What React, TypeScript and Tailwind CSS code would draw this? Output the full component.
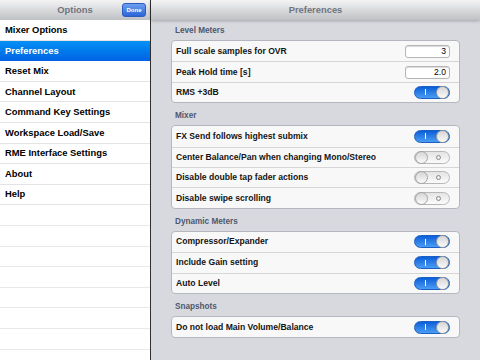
import React from 'react';

type Row =
  | { label: string; kind: 'field'; value: string }
  | { label: string; kind: 'toggle'; on: boolean };

interface Section {
  title: string;
  rows: Row[];
}

const menu = [
  'Mixer Options',
  'Preferences',
  'Reset Mix',
  'Channel Layout',
  'Command Key Settings',
  'Workspace Load/Save',
  'RME Interface Settings',
  'About',
  'Help',
];

const sections: Section[] = [
  {
    title: 'Level Meters',
    rows: [
      { label: 'Full scale samples for OVR', kind: 'field', value: '3' },
      { label: 'Peak Hold time [s]', kind: 'field', value: '2.0' },
      { label: 'RMS +3dB', kind: 'toggle', on: true },
    ],
  },
  {
    title: 'Mixer',
    rows: [
      { label: 'FX Send follows highest submix', kind: 'toggle', on: true },
      { label: 'Center Balance/Pan when changing Mono/Stereo', kind: 'toggle', on: false },
      { label: 'Disable double tap fader actions', kind: 'toggle', on: false },
      { label: 'Disable swipe scrolling', kind: 'toggle', on: false },
    ],
  },
  {
    title: 'Dynamic Meters',
    rows: [
      { label: 'Compressor/Expander', kind: 'toggle', on: true },
      { label: 'Include Gain setting', kind: 'toggle', on: true },
      { label: 'Auto Level', kind: 'toggle', on: true },
    ],
  },
  {
    title: 'Snapshots',
    rows: [{ label: 'Do not load Main Volume/Balance', kind: 'toggle', on: true }],
  },
];

function Toggle({ on }: { on: boolean }) {
  if (on) {
    return (
      <div className="flex h-[13px] w-[36px] items-center rounded-full border border-[#1c5fc4] bg-gradient-to-b from-[#0a5fd8] to-[#4a9cf3]">
        <div className="flex flex-1 justify-center">
          <div className="h-[6px] w-[1px] bg-white" />
        </div>
        <div className="h-[13px] w-[13px] rounded-full border border-[#9a9a9a] bg-gradient-to-b from-[#d6d6d6] to-[#fafafa]" />
      </div>
    );
  }
  return (
    <div className="flex h-[13px] w-[36px] items-center rounded-full border border-[#b7b7b7] bg-gradient-to-b from-[#e4e4e4] to-[#fbfbfb]">
      <div className="h-[13px] w-[13px] rounded-full border border-[#a5a5a5] bg-gradient-to-b from-[#d6d6d6] to-[#fafafa]" />
      <div className="flex flex-1 justify-center">
        <div className="h-[5px] w-[5px] rounded-full border border-[#8a8a8a]" />
      </div>
    </div>
  );
}

export default function App() {
  return (
    <div className="flex h-[360px] w-[480px] overflow-hidden font-['Liberation_Sans',Arial,sans-serif]">
      {/* Options list */}
      <div className="flex w-[151px] shrink-0 flex-col overflow-hidden border-r border-[#2f2f2f] bg-white">
        <div className="grid h-[20px] shrink-0 grid-cols-[1fr_auto_1fr] items-center bg-gradient-to-b from-[#f4f4f4] to-[#bfc1c4]">
          <div />
          <span className="text-[9.4px] font-bold text-[#6f7580]">Options</span>
          <div className="flex justify-end pr-[4px]">
            <span className="flex h-[14px] w-[24px] items-center justify-center rounded-[3px] border border-[#2b5cc0] bg-gradient-to-b from-[#6d9eee] to-[#2a64d8] text-[6px] font-bold text-white">
              Done
            </span>
          </div>
        </div>
        {menu.map((item) => (
          <div
            key={item}
            className={
              item === 'Preferences'
                ? 'flex h-[20.6px] shrink-0 items-center bg-gradient-to-b from-[#0890f4] to-[#0262e4] px-[5px] text-[9.4px] font-bold text-white'
                : 'flex h-[20.6px] shrink-0 items-center border-b border-[#e4e4e4] px-[5px] text-[9.4px] font-bold text-black'
            }
          >
            {item}
          </div>
        ))}
        {Array.from({ length: 8 }).map((_, i) => (
          <div key={i} className="h-[20.6px] shrink-0 border-b border-[#e8e8e8]" />
        ))}
      </div>

      {/* Preferences */}
      <div className="flex flex-1 flex-col bg-[#d8d9de]">
        <div className="relative z-10 flex h-[20px] shrink-0 items-center justify-center bg-gradient-to-b from-[#f4f4f4] to-[#bfc1c4] shadow-[0_1px_3px_rgba(0,0,0,0.25)]">
          <span className="text-[9.4px] font-bold text-[#6f7580]">Preferences</span>
        </div>
        <div className="flex flex-col gap-[7px] px-[20px] pt-[5px]">
          {sections.map((section) => (
            <div key={section.title} className="flex flex-col">
              <div className="mb-[3px] h-[12px] pl-[4px] text-[8.2px] font-bold leading-[12px] text-[#4e586e]">
                {section.title}
              </div>
              <div className="overflow-hidden rounded-[4px] border border-[#b4b7bd] bg-[#f8f8f8]">
                {section.rows.map((row, i) => (
                  <div
                    key={row.label}
                    className={
                      i === 0
                        ? 'flex h-[20.4px] items-center justify-between pl-[4px] pr-[9px]'
                        : 'flex h-[20.4px] items-center justify-between border-t border-[#d6d6d6] pl-[4px] pr-[9px]'
                    }
                  >
                    <span className="text-[8.6px] font-bold text-[#141414]">{row.label}</span>
                    {row.kind === 'field' ? (
                      <div className="flex h-[13px] w-[45px] items-center justify-end rounded-[3px] border border-[#b5b5b5] bg-white pr-[3px] text-[8.6px] text-black shadow-[inset_0_1px_1px_rgba(0,0,0,0.15)]">
                        {row.value}
                      </div>
                    ) : (
                      <Toggle on={row.on} />
                    )}
                  </div>
                ))}
              </div>
            </div>
          ))}
        </div>
      </div>
    </div>
  );
}
